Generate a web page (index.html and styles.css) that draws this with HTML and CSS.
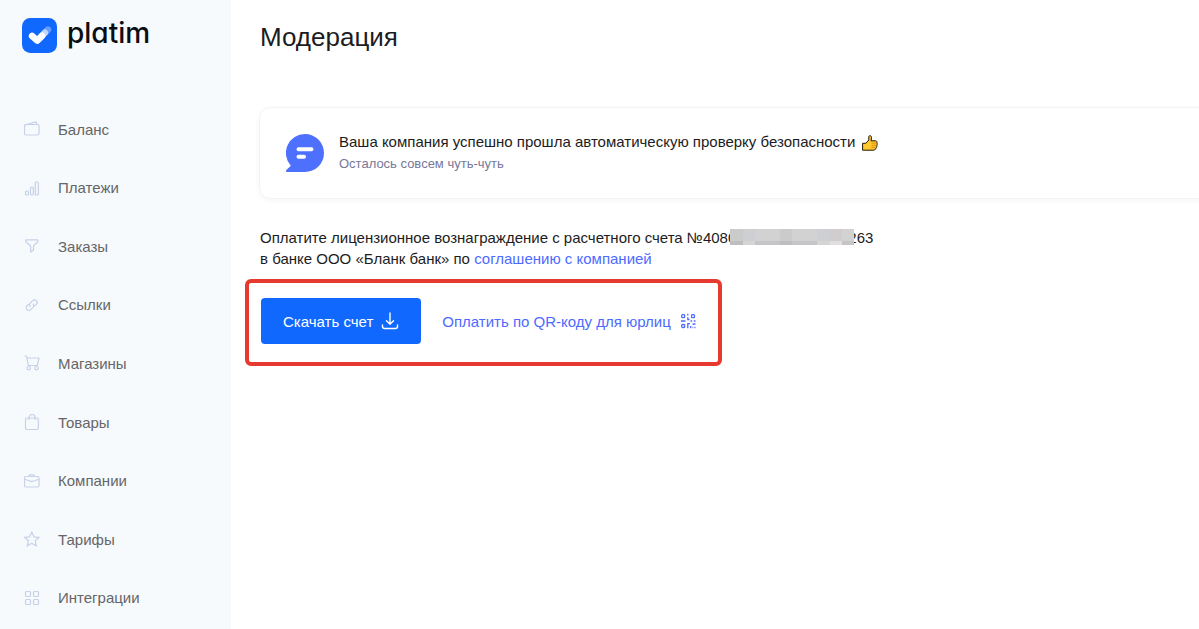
FILE: index.html
```html
<!DOCTYPE html>
<html lang="ru">
<head>
<meta charset="utf-8">
<meta name="viewport" content="width=device-width, initial-scale=1">
<title>Модерация</title>
<link rel="stylesheet" href="styles.css">
</head>
<body>
<div class="layout">
  <aside class="sidebar">
    <a class="brand" href="#">
      <svg class="brand-mark" viewBox="0 0 34 34" aria-hidden="true">
        <rect width="34" height="34" rx="8" fill="#1168ff"/>
        <g fill="none" stroke="#fff" stroke-width="6.400" stroke-linecap="round" stroke-linejoin="round">
          <path d="M21 15.500 25.200 11.300" stroke-opacity=".35"/>
          <path d="M19 17.500 22.200 14.300" stroke-opacity=".6"/>
          <path d="M9.800 17.500 14.800 22 19.500 17.300"/>
        </g>
      </svg>
      <span class="brand-name">platim</span>
    </a>
    <nav class="menu">
      <a class="menu-item" href="#"><svg class="icon" viewBox="0 0 16 16"><rect x=".5" y="3.500" width="14.500" height="10.500" rx="1.500"/><path d="M1 4 11 1.200q1.500-.3 1.500 1v1.300"/></svg>Баланс</a>
      <a class="menu-item" href="#"><svg class="icon" viewBox="0 0 16 16"><rect x="1.500" y="11" width="3" height="4" rx="1"/><rect x="6.500" y="7" width="2.800" height="8" rx="1"/><rect x="11.300" y="2" width="3" height="13" rx="1"/></svg>Платежи</a>
      <a class="menu-item" href="#"><svg class="icon" viewBox="0 0 16 16"><path d="M2 1.800h11.500q1 .8.400 1.700L9.500 8.200v3.900l-2.800 2V8.200L1.800 3.500q-.7-1 .2-1.700z"/></svg>Заказы</a>
      <a class="menu-item" href="#"><svg class="icon" viewBox="0 0 16 16"><path d="M6.300 9.700a2.600 2.600 0 0 1 0-3.700l2.300-2.300a2.600 2.600 0 0 1 3.700 3.700l-1.800 1.800M9 6.700a2.600 2.600 0 0 1 0 3.700l-2.300 2.300a2.600 2.600 0 0 1-3.700-3.700l1.800-1.800"/></svg>Ссылки</a>
      <a class="menu-item" href="#"><svg class="icon" viewBox="0 0 16 16"><path d="M.5 1h2l1.800 9.500h9L15 3H3"/><circle cx="4.700" cy="13.200" r="1.700"/><circle cx="12.500" cy="13.200" r="1.700"/></svg>Магазины</a>
      <a class="menu-item" href="#"><svg class="icon" viewBox="0 0 16 16"><rect x="1.500" y="4" width="12.800" height="11.500" rx="1.500"/><path d="M5 6V3.500a3 3 0 0 1 6 0V6"/></svg>Товары</a>
      <a class="menu-item" href="#"><svg class="icon" viewBox="0 0 16 16"><rect x=".5" y="3.500" width="14.500" height="10.500" rx="1.500"/><path d="M5.300 3.500V2.300q0-.5.500-.5h3.900q.5 0 .5.500v1.200M.7 6.300l5.800 2h2.500l5.900-2"/></svg>Компании</a>
      <a class="menu-item" href="#"><svg class="icon" viewBox="0 0 16 16"><path d="m7.800 1 2.100 4.800 5.300.5-4 3.500 1.200 5.200-4.600-2.700-4.600 2.700 1.200-5.200-4-3.500 5.300-.5z"/></svg>Тарифы</a>
      <a class="menu-item" href="#"><svg class="icon" viewBox="0 0 16 16"><rect x="1.500" y="1.500" width="5" height="5" rx="1"/><rect x="9.500" y="1.500" width="5" height="5" rx="1"/><rect x="1.500" y="9.500" width="5" height="5" rx="1"/><rect x="9.500" y="9.500" width="5" height="5" rx="1"/></svg>Интеграции</a>
    </nav>
  </aside>

  <main class="content">
    <h1 class="title">Модерация</h1>

    <section class="notice">
      <svg class="notice-icon" viewBox="0 0 38 38" aria-hidden="true">
        <path d="M19 0a19 19 0 0 1 0 38H1.200C0 38-.4 36.900.4 36.100L4.800 31.700A19 19 0 0 1 19 0z" fill="#4d70ff"/>
        <path d="M12.500 15.200h13M12.500 22.700h5.500" stroke="#fff" stroke-width="4" stroke-linecap="round"/>
      </svg>
      <div>
        <p class="notice-title">Ваша компания успешно прошла автоматическую проверку безопасности
          <svg class="thumb" viewBox="0 0 16 16" role="img" aria-label="Отлично"><path d="M.6 8.300h3.200L6.800 5V1.800C6.800.2 9.300.3 9.500 2.200c.1 1.300-.2 2.500-.5 3.600h4.500c1.300 0 1.900 1.300 1.200 2.100.8.700.7 1.700 0 2.200.5.700.3 1.700-.4 2.100.3.700-.2 1.500-1 1.700-.2 1-.8 1.300-1.800 1.300H.6z" fill="#ffc82e" stroke="#1b1608" stroke-linejoin="round"/><path d="M9.500 8.200h4.500M9.500 10.300h4.500M9.300 12.400h4" stroke="#d9850c" stroke-width=".8"/></svg></p>
        <p class="notice-text">Осталось совсем чуть-чуть</p>
      </div>
    </section>

    <p class="details">Оплатите лицензионное вознаграждение с расчетного счета №4080<span class="mask"><i></i><i></i><i></i><i></i><i></i><i></i><i></i><i></i><i></i><i></i></span>263<br>в банке ООО «Бланк банк» по <a class="link" href="#">соглашению с компанией</a></p>

    <div class="actions">
      <button class="download" type="button">Скачать счет
        <svg class="download-icon" viewBox="0 0 18 18" aria-hidden="true"><path d="M9 1v11M5.500 8.700 9 12.200l3.500-3.500M1.500 13v1.500q0 2 2 2h11q2 0 2-2V13"/></svg>
      </button>
      <a class="link qr-link" href="#">Оплатить по QR-коду для юрлиц
        <svg class="qr-icon" viewBox="0 0 16 16" aria-hidden="true"><rect x="1.700" y="1.700" width="3" height="3" rx="1"/><rect x="11.500" y="1.700" width="3" height="3" rx="1"/><rect x="1.700" y="11.500" width="3" height="3" rx="1"/><path d="M7.800.8v1.700M7.800 4.300v2.200h1.700M.9 8h4.600M7.800 8v.1M10.500 8h1.700M13.800 8h1.700M7.800 15.200v-4.500h2.200M12.500 11h3M10.700 13v2.200M12.500 14.500h.8M14.500 14.500h1"/></svg>
      </a>
    </div>
  </main>
</div>
</body>
</html>
```

FILE: styles.css
```css
* {
  box-sizing: border-box;
}

body {
  margin: 0;
  background: #fff;
  color: #1c1c22;
  font: 15px/21px "Liberation Sans", Arial, sans-serif;
}

h1,
p {
  margin: 0;
}

a {
  text-decoration: none;
}

.layout {
  display: flex;
  min-height: 100vh;
  overflow: hidden;
}

/* Sidebar */
.sidebar {
  display: flex;
  flex: 0 0 231px;
  flex-direction: column;
  background: #f6fafd;
}

.brand {
  display: flex;
  align-items: center;
  gap: 10px;
  height: 100px;
  padding: 0 22px 30px;
  color: #0b0d12;
}

.brand-mark {
  width: 35px;
  height: 35px;
}

.brand-name {
  padding-bottom: 4px;
  font: 500 28px/32px Inter, sans-serif;
  font-feature-settings: "cv11";
}

.menu {
  display: grid;
  flex: 1;
  grid-auto-rows: 1fr;
  padding-bottom: 2px;
}

.menu-item {
  display: flex;
  align-items: center;
  gap: 18px;
  padding: 0 24px;
  color: #666;
}

.icon {
  width: 16px;
  height: 16px;
  fill: none;
  stroke: #c7d1e8;
  stroke-width: 1.2;
  stroke-linejoin: round;
}

/* Page content */
.content {
  flex: 1;
  min-width: 0;
  padding: 20px 0 0 29px;
}

.title {
  font-size: 26px;
  font-weight: 400;
  line-height: 34px;
}

.notice {
  display: flex;
  align-items: center;
  gap: 15px;
  margin: 53px -12px 28px -1px;
  padding: 22px 26px 23px;
  border: 1px solid #f3f3f5;
  border-radius: 12px;
  box-shadow: 0 2px 6px rgba(0, 0, 0, 0.04);
}

.notice-icon {
  flex: none;
  width: 38px;
  height: 38px;
}

.notice-title {
  line-height: 23px;
}

.thumb {
  width: 16px;
  height: 16px;
  margin-left: 2px;
  vertical-align: -4px;
}

.notice-text {
  color: #77779a;
  font-size: 13px;
  line-height: 22px;
}

.link {
  color: #4d6bff;
}

.mask {
  display: inline-flex;
  position: relative;
  width: 124px;
  height: 16px;
  margin: 0 -6px;
  vertical-align: -2px;
}

.mask i {
  flex: 1;
  background: linear-gradient(#d3d2d3 75%, #c5c5c7 75%);
}

.mask i:nth-child(3n + 2) {
  background: linear-gradient(#cdcfd3 75%, #d5d5d6 75%);
}

.mask i:nth-child(4n + 1) {
  background: linear-gradient(#cbcbcc 75%, #bebec0 75%);
}

.mask i:nth-child(9) {
  background: linear-gradient(#d1cccd 75%, #e2dfdf 75%);
}

/* Payment actions */
.actions {
  display: flex;
  align-items: center;
  width: fit-content;
  margin: 10px 0 0 -15px;
  padding: 15px 22px 18px 12px;
  border: 4px solid #e63a30;
  border-radius: 6px;
}

.download {
  display: flex;
  align-items: center;
  gap: 8px;
  height: 46px;
  padding: 0 22px;
  border: 0;
  border-radius: 4px;
  background: #1168ff;
  color: #fff;
  font: inherit;
}

.download-icon {
  width: 18px;
  height: 18px;
  fill: none;
  stroke: #fff;
  stroke-width: 1.4;
  stroke-linecap: round;
  stroke-linejoin: round;
}

.qr-link {
  display: flex;
  align-items: center;
  gap: 9px;
  margin-left: 21px;
}

.qr-icon {
  width: 16px;
  height: 16px;
  fill: none;
  stroke: #4d6bff;
  stroke-width: 1.3;
}
```
